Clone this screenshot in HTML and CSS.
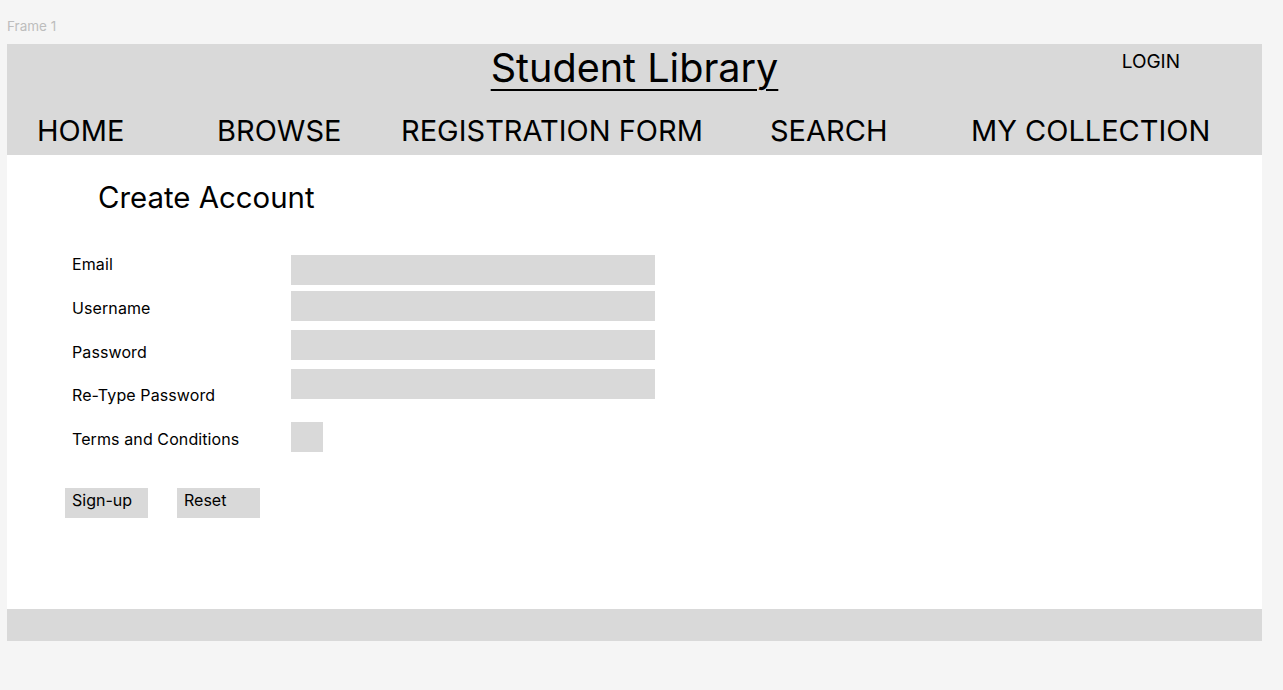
FILE: index.html
```html
<!DOCTYPE html>
<html lang="en">
<head>
<meta charset="utf-8">
<title>Student Library</title>
<link rel="stylesheet" href="styles.css">
</head>
<body>
<div class="frame-label">Frame 1</div>
<div class="frame">
  <header class="header">
    <div class="top-row">
      <div></div>
      <h1 class="title">Student Library</h1>
      <div class="login">LOGIN</div>
    </div>
    <nav class="nav">
      <span>HOME</span>
      <span>BROWSE</span>
      <span>REGISTRATION FORM</span>
      <span>SEARCH</span>
      <span>MY COLLECTION</span>
    </nav>
  </header>
  <main class="main">
    <h2 class="heading">Create Account</h2>
    <div class="form">
      <div class="labels">
        <span>Email</span>
        <span>Username</span>
        <span>Password</span>
        <span>Re-Type Password</span>
        <span>Terms and Conditions</span>
      </div>
      <div class="fields">
        <div class="field"></div>
        <div class="field f2"></div>
        <div class="field f3"></div>
        <div class="field f4"></div>
        <div class="check"></div>
      </div>
    </div>
    <div class="buttons">
      <div class="btn">Sign-up</div>
      <div class="btn">Reset</div>
    </div>
  </main>
  <footer class="footer"></footer>
</div>
</body>
</html>
```
FILE: styles.css
```css
html, body {
  margin: 0;
  padding: 0;
}
body {
  background: #f5f5f5;
  font-family: Inter, "Liberation Sans", sans-serif;
  color: #000;
  width: 1283px;
  height: 690px;
  overflow: hidden;
}
.frame-label {
  padding: 18px 0 0 7px;
  height: 44px;
  box-sizing: border-box;
  font-size: 13.5px;
  line-height: 16px;
  color: #bdbdbd;
}
.frame {
  margin-left: 7px;
  width: 1255px;
  height: 597px;
  background: #fff;
  display: flex;
  flex-direction: column;
}
.header {
  background: #d9d9d9;
  height: 111px;
  flex: none;
}
.top-row {
  display: grid;
  grid-template-columns: 1fr auto 1fr;
  height: 69px;
}
.title {
  margin: 0;
  font-weight: 400;
  font-size: 39.6px;
  line-height: 48px;
  text-decoration: underline;
  text-decoration-thickness: 2px;
  text-underline-offset: 7px;
}
.login {
  justify-self: end;
  margin-right: 82px;
  padding-top: 6px;
  font-size: 19px;
  line-height: 23px;
}
.nav {
  display: grid;
  grid-template-columns: 180px 184px 369px 201px auto;
  padding-left: 30px;
  font-size: 29px;
  line-height: 35px;
}
.main {
  flex: 1;
  padding: 25px 0 0 65px;
}
.heading {
  margin: 0 0 0 26px;
  font-weight: 400;
  font-size: 29.4px;
  line-height: 35px;
}
.form {
  display: flex;
  margin-top: 39px;
  font-size: 16px;
  letter-spacing: 0.1px;
}
.labels {
  display: flex;
  flex-direction: column;
  gap: 24.75px;
  width: 219px;
  margin-top: 1px;
  line-height: 19px;
}
.fields {
  display: flex;
  flex-direction: column;
  margin-top: 1px;
}
.field {
  width: 364px;
  height: 30px;
  background: #d9d9d9;
}
.f2 { margin-top: 6px; }
.f3, .f4 { margin-top: 9px; }
.check {
  width: 32px;
  height: 30px;
  background: #d9d9d9;
  margin-top: 23px;
}
.buttons {
  display: flex;
  gap: 29px;
  margin-top: 36px;
  margin-left: -7px;
}
.btn {
  width: 83px;
  height: 30px;
  box-sizing: border-box;
  padding: 3px 0 0 7px;
  background: #d9d9d9;
  font-size: 16px;
  line-height: 19px;
}
.footer {
  background: #d9d9d9;
  height: 32px;
  flex: none;
}
```
